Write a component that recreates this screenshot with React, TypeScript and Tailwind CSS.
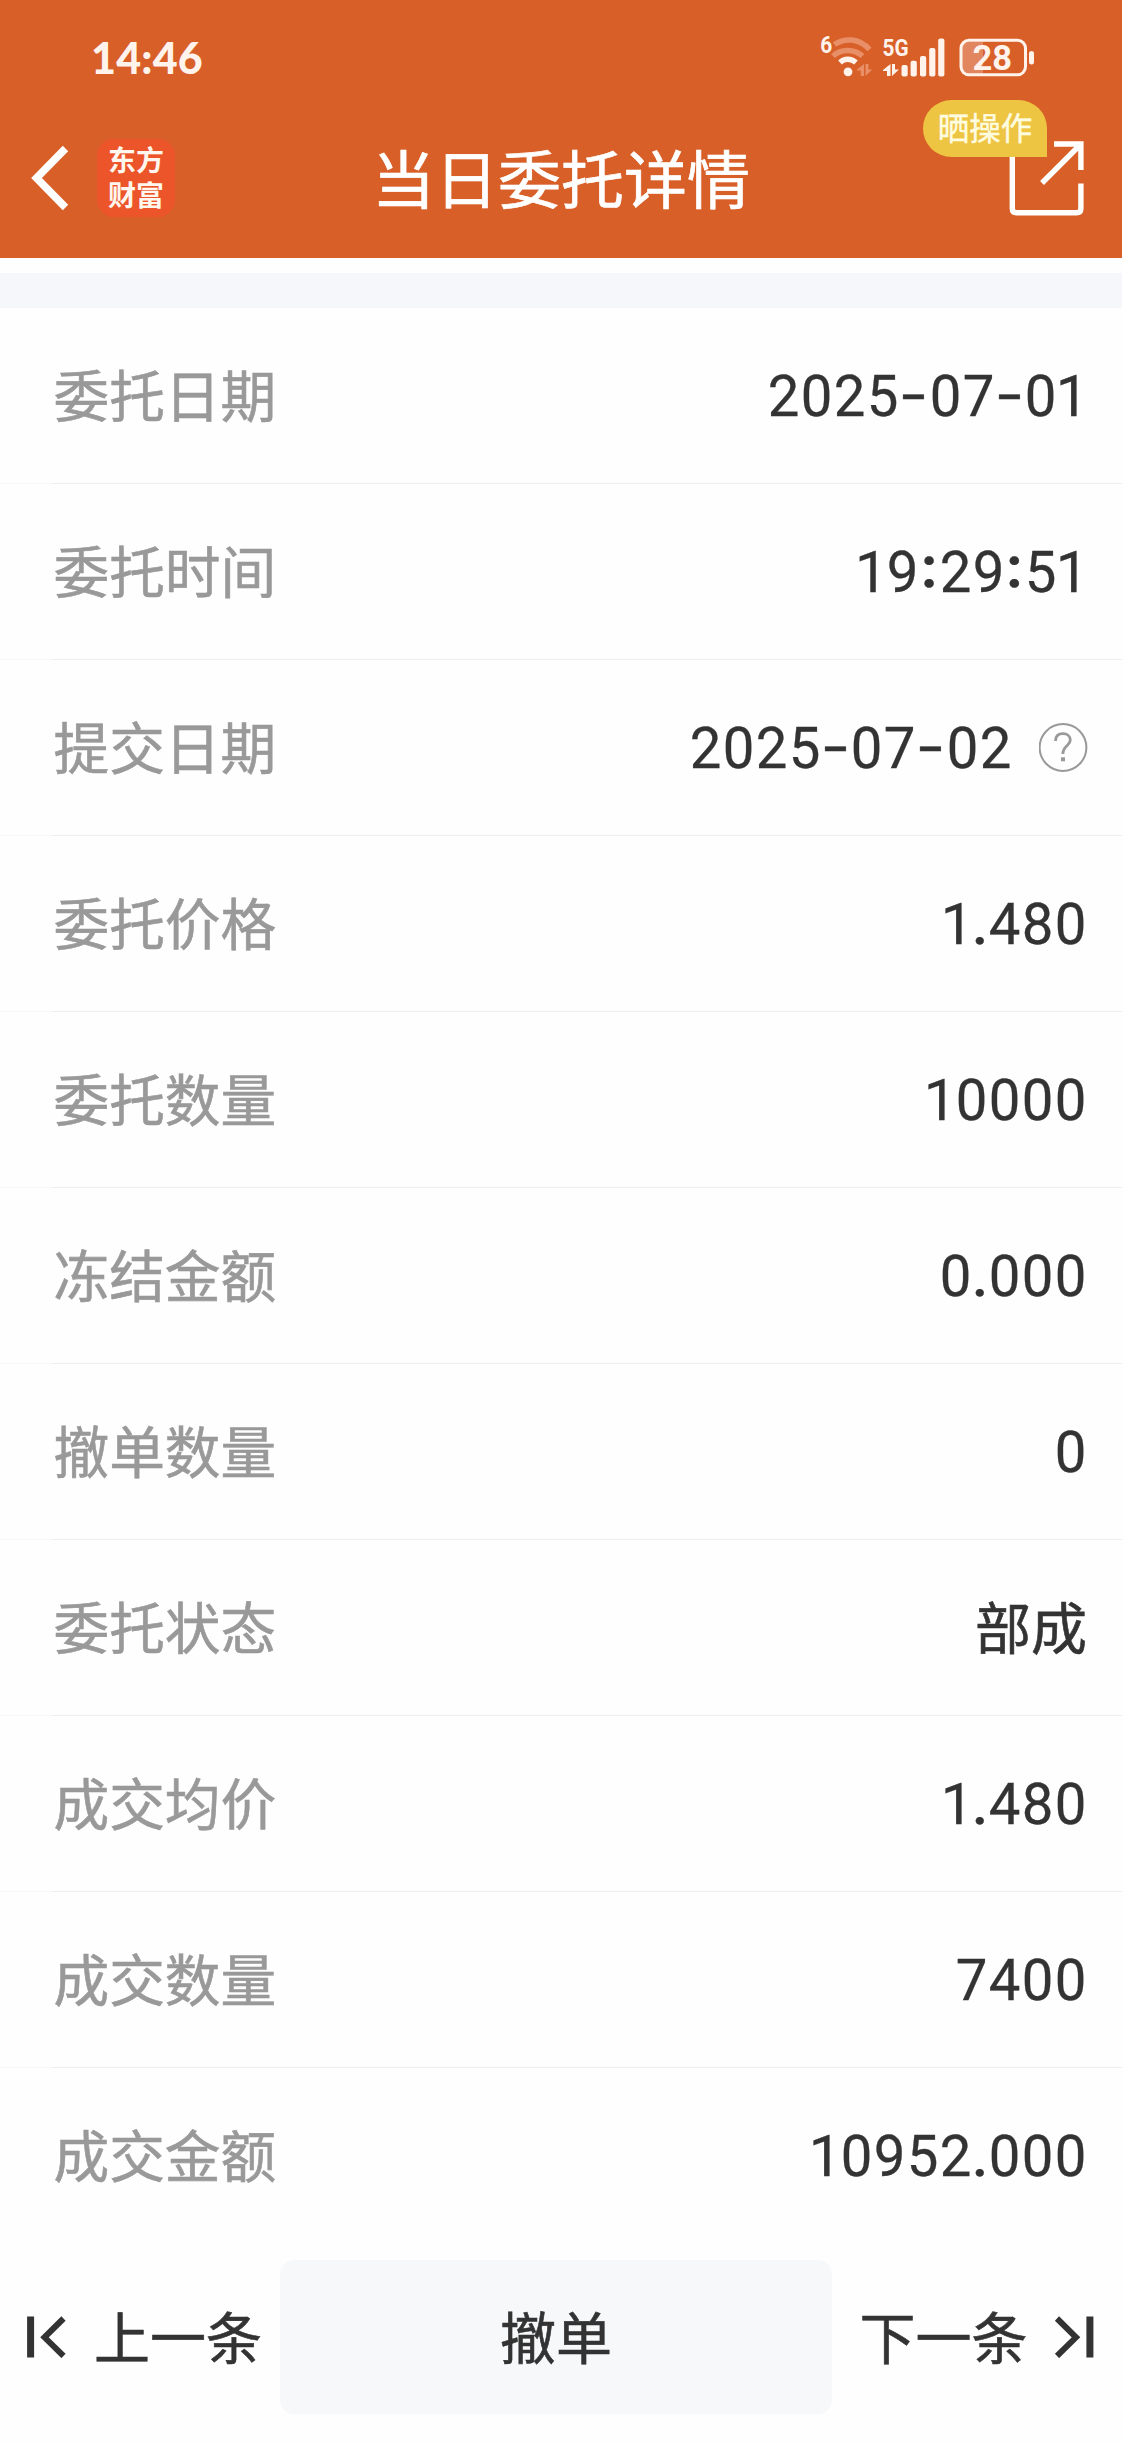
import React from "react";

const rows: { label: string; value: string; help?: boolean }[] = [
  { label: "委托日期", value: "2025-07-01" },
  { label: "委托时间", value: "19:29:51" },
  { label: "提交日期", value: "2025-07-02", help: true },
  { label: "委托价格", value: "1.480" },
  { label: "委托数量", value: "10000" },
  { label: "冻结金额", value: "0.000" },
  { label: "撤单数量", value: "0" },
  { label: "委托状态", value: "部成" },
  { label: "成交均价", value: "1.480" },
  { label: "成交数量", value: "7400" },
  { label: "成交金额", value: "10952.000" },
];

function Value({ text }: { text: string }) {
  if (!/^[\d.:-]+$/.test(text)) {
    return <span className="-translate-y-[3px] text-[56px] [-webkit-text-stroke:0.6px_currentColor]">{text}</span>;
  }
  return (
    <span className="flex font-['Roboto','Noto_Sans_CJK_SC',sans-serif] text-[58px] leading-none [-webkit-text-stroke:0.3px_currentColor]">
      {text.split("").map((c, i) => {
        if (c === "-")
          return (
            <span key={i} className="w-[29.3px] -translate-y-[2px] scale-x-[1.5] text-center">
              {c}
            </span>
          );
        if (c === ":")
          return (
            <span key={i} className="flex w-[19.3px] -translate-y-[5px] justify-center font-bold">
              {c}
            </span>
          );
        if (c === ".")
          return (
            <span key={i} className="flex w-[16px] justify-center font-medium">
              {c}
            </span>
          );
        if (c === "1")
          return (
            <span key={i} className="flex w-[30px] justify-center">
              {c}
            </span>
          );
        return (
          <span key={i} className="w-[33px] scale-x-[0.97] text-center">
            {c}
          </span>
        );
      })}
    </span>
  );
}

function HelpIcon() {
  return (
    <svg width="50" height="50" viewBox="0 0 50 50" fill="none" stroke="#999" className="ml-[27px] -mr-[1.5px]">
      <circle cx="24" cy="24.5" r="23.4" strokeWidth="2" />
      <path
        d="M16.5 18C16.5 13 19.7 10.7 24 10.7C28.3 10.7 31.3 13.3 31.3 17C31.3 19.8 29.6 21.1 27.7 22.9C25.2 25.2 23.9 26.7 23.9 31"
        strokeWidth="2.8"
      />
      <rect x="22" y="34.3" width="4" height="4" fill="#999" stroke="none" />
    </svg>
  );
}

function StatusIcons() {
  return (
    <svg width="220" height="44" viewBox="0 0 220 44" fill="none" className="overflow-visible">
      <text x="0.3" y="18.3" fontSize="23" fontWeight="700" fontFamily="Roboto, sans-serif" fill="#fff3ec" textLength="12" lengthAdjust="spacingAndGlyphs">
        6
      </text>
      <path d="M14.5 9.5C25 2.5 39 3 49.5 14.5" stroke="#e88f68" strokeWidth="5.5" />
      <path d="M13 21C21 13.5 34 13.5 42.5 21" stroke="#e88f68" strokeWidth="5.5" />
      <path d="M20 27.5C24.5 23.3 31 23.3 36 27.5" stroke="#fff3ec" strokeWidth="5.5" />
      <circle cx="28" cy="36.8" r="4.4" fill="#fff3ec" />
      <path d="M37 34.5L44 29V41H40.8V35.5H37ZM45.5 29H48.4V34.5H52.3L45.5 41Z" fill="#e88f68" />
      <text x="62.5" y="21.2" fontSize="23.5" fontWeight="700" fontFamily="Roboto, sans-serif" fill="#fff3ec" textLength="26" lengthAdjust="spacingAndGlyphs">
        5G
      </text>
      <path d="M63 35L70.5 29V41H67V36H63ZM72 29H75V34.5H79L72 41Z" fill="#fff3ec" />
      <g fill="#fff3ec">
        <rect x="81.5" y="30" width="6.2" height="11.5" rx="2" />
        <rect x="90.6" y="25.7" width="6.2" height="15.8" rx="2" />
        <rect x="100" y="21" width="6.2" height="20.5" rx="2" />
        <rect x="109.2" y="13" width="6.2" height="28.5" rx="2" />
        <rect x="118.2" y="3.5" width="6.2" height="38" rx="2" />
      </g>
      <path d="M148 7H163V39H148Q141 39 141 32V13Q141 7 148 7Z" fill="#e28660" />
      <rect x="141" y="5.3" width="64.5" height="34.5" rx="8" stroke="#fff3ec" strokeWidth="3" />
      <rect x="209" y="16" width="5" height="13.5" rx="2.5" fill="#fff3ec" />
      <text x="152.5" y="34.9" fontSize="34.5" fontWeight="700" fontFamily="Roboto, sans-serif" fill="#fff3ec" textLength="39.5" lengthAdjust="spacing">
        28
      </text>
    </svg>
  );
}

export default function App() {
  return (
    <div className="h-[2442px] w-[1122px] overflow-hidden bg-[#fefefe] font-['Noto_Sans_CJK_SC',sans-serif] text-[#333]">
      <header className="flex h-[258px] flex-col bg-[#d85f28]">
        <div className="flex h-[116px] items-start justify-between pr-[82px] pl-[91px]">
          <span className="mt-[34px] font-['Lato','Noto_Sans_CJK_SC',sans-serif] text-[43px] leading-[48px] font-black tracking-[0.2px] text-[#fff3ec]">
            14:46
          </span>
          <div className="mt-[35px]">
            <StatusIcons />
          </div>
        </div>
        <div className="relative flex h-[124px] items-center justify-center">
          <div className="absolute top-[23px] left-[31px] flex items-center gap-[28px]">
            <svg width="38" height="66" viewBox="0 0 38 66" fill="none" stroke="#fff" strokeWidth="7.6">
              <path d="M34.5 3.5L5.5 33L34.5 62.5" />
            </svg>
            <div className="flex h-[78px] w-[78px] flex-col items-center justify-center rounded-[17px] bg-[#ec5429] pb-[3px] text-[28px] leading-[35px] font-bold text-[#fff6ee]">
              <span>东方</span>
              <span>财富</span>
            </div>
          </div>
          <h1 className="-translate-y-[3.5px] text-[63px] leading-none text-white [-webkit-text-stroke:0.7px_currentColor]">当日委托详情</h1>
          <svg
            width="76"
            height="76"
            viewBox="0 0 76 76"
            fill="none"
            stroke="#fff"
            strokeWidth="5.4"
            className="absolute top-[24px] left-[1008.5px]"
          >
            <path d="M3.3 2V68.5Q3.3 72.7 7.5 72.7H67.5Q71.9 72.7 71.9 68.5V43.5" />
            <path d="M45 4H71.9V30M71 5L33 43" />
          </svg>
          <span className="absolute -top-[16px] left-[923px] flex h-[57px] w-[124px] items-center justify-center rounded-full rounded-br-none bg-[#eec443] pb-[3px] text-[31.5px] leading-none text-[#fffde0] [-webkit-text-stroke:0.4px_currentColor]">
            晒操作
          </span>
        </div>
      </header>
      <div className="mt-[15px] h-[35px] bg-[#f6f7fa]" />
      <main>
        {rows.map((r, i) => (
          <div key={r.label} className="flex h-[176px] flex-col">
            <div className="flex flex-1 items-center justify-between pr-[35px] pl-[53.5px] leading-none">
              <span className="-translate-y-[3.5px] text-[55.7px] text-[#999] [-webkit-text-stroke:0.6px_currentColor]">{r.label}</span>
              <div className="flex items-center">
                <Value text={r.value} />
                {r.help && <HelpIcon />}
              </div>
            </div>
            {i < rows.length - 1 && (
              <div className="flex h-px">
                <div className="w-[53px] bg-[#f7f7f7]" />
                <div className="flex-1 bg-[#ededed]" />
              </div>
            )}
          </div>
        ))}
      </main>
      <footer className="mt-[16px] flex h-[154px] items-center text-[56px] leading-none">
        <button className="flex w-[280px] items-center pl-[27px]">
          <svg width="40" height="42" viewBox="0 0 40 42" fill="none" stroke="#333">
            <path d="M3.6 0.5V41.5" strokeWidth="7" />
            <path d="M36.5 2.5L17.5 21.3L36.5 40" strokeWidth="6" />
          </svg>
          <span className="ml-[27px] -translate-y-[2px] [-webkit-text-stroke:0.6px_currentColor]">上一条</span>
        </button>
        <button className="h-[154px] w-[552px] rounded-[14px] bg-[#f7f8fa] pb-[4px] [-webkit-text-stroke:0.6px_currentColor]">撤单</button>
        <button className="flex flex-1 items-center pl-[27.5px]">
          <span className="-translate-y-[2px] [-webkit-text-stroke:0.6px_currentColor]">下一条</span>
          <svg width="40" height="42" viewBox="0 0 40 42" fill="none" stroke="#333" className="ml-[26.5px]">
            <path d="M35.9 0.5V41.5" strokeWidth="7" />
            <path d="M3 2.5L22 21.3L3 40" strokeWidth="6" />
          </svg>
        </button>
      </footer>
    </div>
  );
}
